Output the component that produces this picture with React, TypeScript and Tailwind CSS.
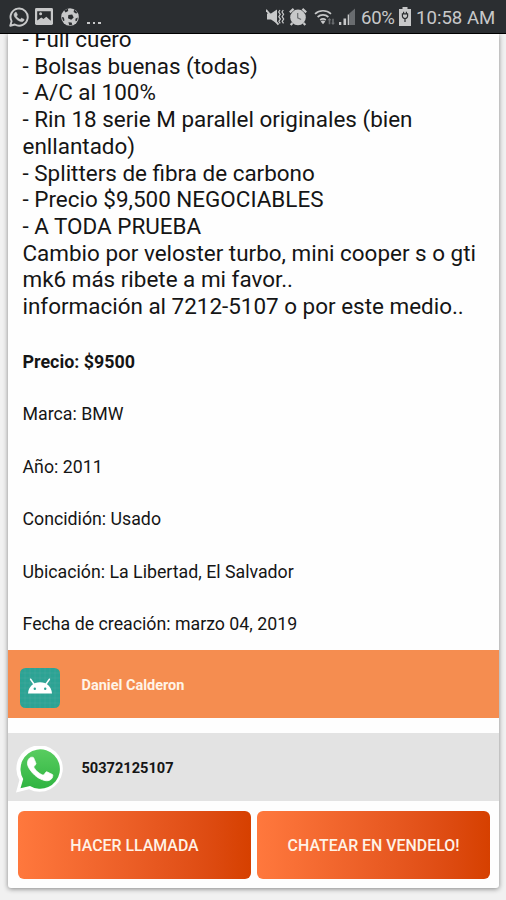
import React from "react";

const description = [
  "- Full cuero",
  "- Bolsas buenas (todas)",
  "- A/C al 100%",
  "- Rin 18 serie M parallel originales (bien",
  "enllantado)",
  "- Splitters de fibra de carbono",
  "- Precio $9,500 NEGOCIABLES",
  "- A TODA PRUEBA",
  "Cambio por veloster turbo, mini cooper s o gti",
  "mk6 más ribete a mi favor..",
  "información al 7212-5107 o por este medio..",
];

const details = [
  "Marca: BMW",
  "Año: 2011",
  "Concidión: Usado",
  "Ubicación: La Libertad, El Salvador",
  "Fecha de creación: marzo 04, 2019",
];

const HANDSET =
  "M17.47 14.38c-.3-.15-1.76-.87-2.03-.97-.27-.1-.47-.15-.67.15-.2.3-.77.97-.94 1.16-.17.2-.35.22-.64.08-.3-.15-1.26-.46-2.39-1.48-.88-.79-1.48-1.76-1.65-2.06-.17-.3-.02-.46.13-.6.13-.14.3-.35.45-.53.15-.17.2-.3.3-.5.1-.2.05-.37-.03-.52-.07-.15-.67-1.61-.91-2.2-.24-.59-.49-.51-.67-.52h-.57c-.2 0-.52.08-.79.37-.27.3-1.04 1.02-1.04 2.48s1.07 2.88 1.21 3.07c.15.2 2.1 3.2 5.08 4.49.71.3 1.26.49 1.69.63.71.22 1.36.19 1.87.12.57-.09 1.76-.72 2.01-1.42.25-.69.25-1.29.17-1.41-.07-.13-.27-.2-.57-.35";

function StatusBar() {
  return (
    <header className="relative z-10 flex h-[34px] shrink-0 items-center border-b border-black bg-[#2b2e31] text-[#c7c8c9]">
      <div className="flex h-full items-center pl-[9px]">
        <svg className="h-5 w-5" viewBox="0 0 24 24" fill="none">
          <path d="M1.5 22.5 3.1 17A10.3 10.3 0 1 1 7 21z" stroke="currentColor" strokeWidth="2.3" strokeLinejoin="round" />
          <path d={HANDSET} fill="currentColor" stroke="currentColor" strokeWidth=".6" />
        </svg>
        <svg className="ml-[6px] h-[17px] w-[18px]" viewBox="0 0 18 17">
          <rect width="18" height="17" rx="1.4" fill="currentColor" />
          <path d="M2.2 3.2h13.6v9.6l-4.5-4-2.8 2.1-2.2-1.5-4.1 3z" fill="#2b2e31" />
          <circle cx="5.6" cy="5.8" r="1.5" fill="currentColor" />
        </svg>
        <svg className="ml-[8px] h-[18px] w-[18px]" viewBox="0 0 18 18">
          <circle cx="9" cy="9" r="8.8" fill="currentColor" />
          <g fill="#2b2e31">
            <path d="m7.4 7.1 3.8-.7 1.5 3.1-2.5 2.2-3.2-1.5z" />
            <path d="M3.1 2.5 6.9.7l.3 2.2-2.6 1.7zM13.1 1.4l3 2.8-.8 1.5-2.7-1.6zM.8 9l2.1.6.6 3-1.4.5zM7.4 14.2l3.2.2.7 2.3-3 .6zM16.8 9.4l-.8 3.4-1.5.5-.1-2.5z" />
          </g>
        </svg>
        <div className="ml-[8px] mt-[13px] flex gap-[3px]">
          <i className="h-[2px] w-[3px] bg-current" />
          <i className="h-[2px] w-[2px] bg-current" />
          <i className="h-[2px] w-[3px] bg-current" />
        </div>
      </div>
      <div className="ml-auto flex h-full items-center pr-[10px]">
        <svg className="h-[18px] w-[19px]" viewBox="0 0 19 18" fill="none">
          <path d="M1 5.6h4l6-4v14l-6-4H1z" fill="currentColor" />
          <path d="m0 1.8 12.5 14.8" stroke="currentColor" strokeWidth="1.8" />
          <path d="m14 2-1.3 2 1.6 2.3-1.5 2.4 1.6 2.4-1.5 2.2 1.3 2M17.3 2 16 4l1.6 2.3-1.5 2.4 1.6 2.4-1.5 2.2 1.3 2" stroke="currentColor" strokeWidth="1.2" />
        </svg>
        <svg className="ml-[4px] h-[18px] w-[18px]" viewBox="0 0 18 18" fill="none">
          <path d="M.8 4.4 4.6.9M17.2 4.4 13.4.9M3.5 15l-1.8 2M14.5 15l1.8 2" stroke="currentColor" strokeWidth="2.2" />
          <circle cx="9" cy="9.4" r="7.8" fill="currentColor" />
          <path d="M8.7 5v4.8l3.4 1.7" stroke="#6c6f71" strokeWidth="1.2" />
        </svg>
        <svg className="ml-[7px] h-[18px] w-[22px]" viewBox="0 0 22 18" fill="none">
          <path d="M1 5.8a12 12 0 0 1 16 0M3.6 9a8 8 0 0 1 10.8 0M6.2 12a4.4 4.4 0 0 1 5.6 0" stroke="currentColor" strokeWidth="1.7" />
          <path d="m6.7 13.6 2.3 2.7 2.3-2.7a3.2 3.2 0 0 0-4.6 0z" fill="currentColor" />
          <path d="m15.5 10 2 2.2h-1.2v4h-1.6v-4h-1.2zM19 17l-2-2.3h1.2v-4h1.6v4H21z" fill="#6a6d70" />
        </svg>
        <svg className="ml-[2px] h-[18px] w-[18px]" viewBox="0 0 18 18">
          <path d="M1 14h2.3v3H1zM5.500 10.500h2.600V17H5.500z" fill="currentColor" />
          <path d="M9.700 6.500h1.600V17H9.700z" fill="currentColor" />
          <path d="M11.300 5.500 17 .5V17h-5.700z" fill="#696c6f" />
        </svg>
        <span className="ml-[5px] mt-[2px] w-[36px] whitespace-nowrap text-[18.6px] leading-[34px] tracking-[-0.3px]">60%</span>
        <svg className="ml-[2px] h-[19px] w-[12px]" viewBox="0 0 12 19" fill="none">
          <path d="M3.5 0h5v2H12v17H0V2h3.5z" fill="currentColor" />
          <path d="M6 15v-3.200M3.400 6.800v2.100A2.600 2.600 0 0 0 6 11.500a2.600 2.600 0 0 0 2.600-2.600V6.800zM4.600 6.800V4.700M7.400 6.800V4.700" stroke="#2b2e31" strokeWidth="1.2" />
        </svg>
        <span className="ml-[5px] mt-[2px] w-[80px] whitespace-nowrap text-[18.6px] leading-[34px]">10:58 AM</span>
      </div>
    </header>
  );
}

function AndroidIcon() {
  return (
    <svg className="h-10 w-10" viewBox="0 0 40 40">
      <rect width="40" height="40" rx="5.5" fill="#2ca394" />
      <path d="M5 0v40M10 0v40M15 0v40M20 0v40M25 0v40M30 0v40M35 0v40M0 5h40M0 10h40M0 15h40M0 20h40M0 25h40M0 30h40M0 35h40" stroke="#68b8a9" strokeOpacity=".4" strokeWidth=".6" />
      <path d="m10.600 11.200 4.200 6M29.400 11.200l-4.200 6" stroke="#fff" strokeWidth="1.500" strokeLinecap="round" />
      <path d="M8 25.500C8.500 18.500 13.300 14.200 20 14.200S31.500 18.500 32 25.500z" fill="#fff" />
      <circle cx="14.800" cy="20.700" r="1.200" fill="#2ca394" />
      <circle cx="25.200" cy="20.700" r="1.200" fill="#2ca394" />
    </svg>
  );
}

function WhatsAppIcon() {
  return (
    <svg className="h-[47px] w-[47px]" viewBox="0 0 47 47">
      <defs>
        <linearGradient id="wa" gradientUnits="userSpaceOnUse" x1="0" y1="3" x2="0" y2="43">
          <stop offset="0" stopColor="#59cd60" />
          <stop offset="1" stopColor="#2fb441" />
        </linearGradient>
      </defs>
      <path d="M0 46.500 3.400 34A23.200 23.200 0 1 1 13 43.200z" fill="#fff" />
      <path d="M4.500 42.200 7.200 33A19.700 19.700 0 1 1 14 39.900z" fill="url(#wa)" />
      <g transform="translate(-1.200 -2.200) scale(2.100)">
        <path d={HANDSET} fill="#fff" stroke="#fff" strokeWidth=".35" />
      </g>
    </svg>
  );
}

function ActionButton({ children }: { children: string }) {
  return (
    <button className="h-[68px] w-[233px] rounded-[6px] bg-linear-to-r from-[#ff783d] to-[#d64000] pt-[2px] text-[15.9px] font-medium whitespace-nowrap text-[#fff2e6]">
      {children}
    </button>
  );
}

export default function App() {
  return (
    <div className="flex h-[900px] w-[506px] flex-col overflow-hidden bg-[#f1f1f1] font-[Roboto,sans-serif] text-[#151515]">
      <StatusBar />
      <main className="mx-[8px] mr-[7px] flex h-[854px] flex-col rounded-b-[3px] bg-[#fefefe] shadow-[0_1px_5px_rgba(0,0,0,0.45)]">
        <section className="-mt-[8px] h-[310px] pl-[14.5px] text-[22.45px] leading-[26.7px]">
          {description.map((line) => (
            <p key={line} className="whitespace-nowrap">
              {line}
            </p>
          ))}
        </section>
        <section className="flex h-[314px] flex-col pl-[14.5px] text-[17.75px] leading-[52.4px]">
          <p className="text-[17.9px] font-bold">Precio: $9500</p>
          {details.map((line) => (
            <p key={line}>{line}</p>
          ))}
        </section>
        <section className="flex h-[68px] items-center bg-[#f58d50] pl-[12px]">
          <div className="mt-[7px]">
            <AndroidIcon />
          </div>
          <span className="mt-[3px] ml-[21.5px] text-[14.5px] font-bold text-[#fff4e8]">Daniel Calderon</span>
        </section>
        <section className="mt-[15px] flex h-[68px] items-center bg-[#e3e3e3] pl-[8px]">
          <div className="mt-[5px]">
            <WhatsAppIcon />
          </div>
          <span className="mt-[3px] ml-[18.5px] text-[14.6px] font-bold">50372125107</span>
        </section>
        <section className="mt-[10px] flex gap-[6px] pl-[10px]">
          <ActionButton>HACER LLAMADA</ActionButton>
          <ActionButton>CHATEAR EN VENDELO!</ActionButton>
        </section>
      </main>
    </div>
  );
}
